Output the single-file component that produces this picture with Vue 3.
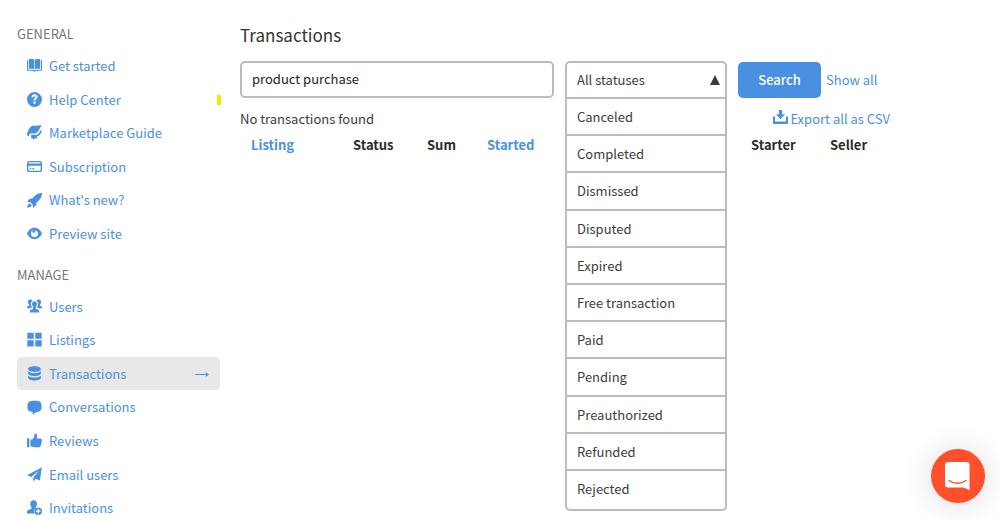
<script setup>
import { ref } from 'vue'

const general = [
  { icon: 'book', label: 'Get started' },
  { icon: 'help', label: 'Help Center', flag: true },
  { icon: 'guide', label: 'Marketplace Guide' },
  { icon: 'card', label: 'Subscription' },
  { icon: 'rocket', label: "What's new?" },
  { icon: 'eye', label: 'Preview site' },
]
const manage = [
  { icon: 'users', label: 'Users' },
  { icon: 'grid', label: 'Listings' },
  { icon: 'stack', label: 'Transactions', active: true },
  { icon: 'chat', label: 'Conversations' },
  { icon: 'thumb', label: 'Reviews' },
  { icon: 'plane', label: 'Email users' },
  { icon: 'invite', label: 'Invitations' },
]
const sections = [
  { title: 'GENERAL', items: general },
  { title: 'MANAGE', items: manage },
]

const icons = {
  book: 'M0 2h1v9h4.6c.6 0 1 .3 1.4.7.4-.4.8-.7 1.4-.7H13V2h1v10H8.700c-.5 0-.6.8-1.700.8S5.800 12 5.300 12H0zM1.700 1h3.500c.7 0 1.200.3 1.500.8v8.800c-.4-.3-.9-.5-1.500-.5H1.700zM12.300 1H8.800c-.7 0-1.200.3-1.500.8v8.800c.4-.3.9-.5 1.500-.5h3.500z',
  help: 'M7 0a7 7 0 1 1 0 14A7 7 0 0 1 7 0zM4.200 5h1.900c0-.7.3-1.100.9-1.100.5 0 .9.300.9.800 0 1-1.800 1.100-1.800 3.200h1.800c0-1.300 2-1.500 2-3.400C9.900 3 8.700 2.200 7.100 2.200 5.300 2.200 4.200 3.300 4.200 5zM6 8.900v2h2v-2z',
  guide: 'M4.500 1C6.500.2 9 1.100 12.300.3L13.600.2c-1.400 2.300-2.700 5.700-5 7.400-1.700.8-4-.2-6 .7-1 .6-.9 1.500-.3 1.900C-.2 10.800-.2 9 .2 7.700 1.200 5 2 2 4.500 1zM12.800 5l1.200.5c-1.200 2.700-2.700 4.900-4.800 5.100V13l-1.600-.8-1.500 1.800-.8-1.700-1.400.2V9.400c1.500-.6 3.200.2 5.200-.2 1.700-.6 2.700-2.400 3.700-4.200z',
  card: 'M2 1.800h10c1.200 0 2 .8 2 2v6.400c0 1.200-.8 2-2 2H2c-1.200 0-2-.8-2-2V3.800c0-1.200.8-2 2-2zM1.300 4.200h11.400c0-.8-.4-1.200-.9-1.200H2.200c-.5 0-.9.4-.9 1.200zM1.300 6.300V10c0 .6.4 1 .9 1h9.600c.5 0 .9-.4.9-1V6.300zM2.500 8.400H4v1.200H2.500zM5 8.400h1.700v1.200H5z',
  rocket: 'M14 0c.1 3.400-1.600 6.200-5.200 9.200l-.2 2.300L5.800 14l-.6-3.200-2.100-2.100L0 8.200l2.600-2.800 2.300-.2C7.800 1.600 10.500-.1 14 0zM2.300 9.500l2.200 2.200c-.7 1.400-2.300 1.800-4.300 2.100.2-2 .7-3.600 2.100-4.300z',
  eye: 'M7 1.700c3.200 0 5.700 2.200 7 5.300-1.300 3.100-3.800 5.300-7 5.300S1.300 10.100 0 7c1.300-3.100 3.800-5.300 7-5.300zM7 3.800a3.300 3.300 0 1 0 3.300 3.300C10.300 5.700 9.200 4.300 7.500 3.900c.5.900.2 1.900-.7 2.200-1 .4-1.700 0-2.100-.7.500-1 1.300-1.500 2.300-1.600z',
  users: 'M.9 2.800a2.300 2.300 0 0 1 4.300-1.200A3.600 3.600 0 0 0 4 6c.1.600.5 1.100.8 1.500L3.400 8.700H0V7.300l1.800-1V5.200c-.5-.5-.9-1.400-.9-2.400zM13.100 2.800a2.300 2.300 0 0 0-4.300-1.200A3.600 3.600 0 0 1 10 6c-.1.600-.5 1.100-.8 1.500l1.400 1.200H14V7.300l-1.800-1V5.200c.5-.5.9-1.400.9-2.400zM7 2.100c1.500 0 2.400 1 2.300 2.500 0 1.100-.5 1.900-1 2.500v2l3 1.500v2H2.700v-2l3-1.500v-2c-.5-.6-1-1.400-1-2.500C4.700 3.100 5.500 2.100 7 2.100z',
  grid: 'M.3.600h6v5.800h-6zM7.700.600h6v5.800h-6zM.3 7.800h6v5.800h-6zM7.700 7.800h6v5.800h-6z',
  stack: 'M7 .3c3.500 0 6 1.100 6 2.600S10.500 5.600 7 5.600 1 4.500 1 2.900 3.500.3 7 .3zM1 5c1.500 1.300 3.600 1.700 6 1.700S11.500 6.300 13 5v1.500c0 1.600-2.500 2.800-6 2.800S1 8.100 1 6.500zM1 9c1.500 1.300 3.600 1.700 6 1.700s4.500-.4 6-1.700v1.700c0 1.700-2.500 2.800-6 2.800s-6-1.100-6-2.800z',
  chat: 'M7 .8c4.900 0 6.600.8 6.600 5.200 0 4.100-1.500 4.900-4.600 5.100L5.300 13.600v-2.500C1.700 10.900.4 10 .4 6 .4 1.600 2.100.8 7 .8z',
  thumb: 'M0 5h2.200v8.200H0zM3.200 6h1.900l1.800-2.900V.8c.7-.5 1.900-.3 2.300.7.500 1.100.1 2.700-.3 3.700h3.600c1.800.2 1.800 2.400 1.100 2.800.3 1 .1 1.700-.4 2.100.2.900-.1 1.500-.6 1.800-.1 1-.7 1.500-2 1.500-2.700.1-5.400-.1-7.400-1z',
  plane: 'M13.800.2l-1.700 12.300-4-1.600-2.200 2.900V9.900l5.700-7-7.500 6.500L0 7.800z',
  invite: 'M6.200.3c2 0 3.200 1.300 3.100 3.500 0 1.300-.5 2.300-1.100 3v.6a4.200 4.200 0 0 0-1 5.300H0v-2.100c.2-1.500 2.600-1.500 4.200-2.700V6.800c-.6-.7-1.100-1.700-1.100-3C3 1.600 4.200.3 6.200.3zM10.500 6.900a3.500 3.500 0 1 1 0 7 3.500 3.500 0 0 1 0-7zM9.900 8.300v1.500H8.400V11h1.500v1.500h1.200V11h1.500V9.800h-1.500V8.300z',
}

const statuses = [
  'Canceled', 'Completed', 'Dismissed', 'Disputed', 'Expired', 'Free transaction',
  'Paid', 'Pending', 'Preauthorized', 'Refunded', 'Rejected',
]
const query = ref('product purchase')
const status = ref('All statuses')
const open = ref(true)

function pick(value) {
  status.value = value
  open.value = false
}
</script>

<template>
  <div class="page">
    <aside class="sidebar">
      <nav v-for="section in sections" :key="section.title" :aria-label="section.title">
        <h2>{{ section.title }}</h2>
        <ul>
          <li v-for="item in section.items" :key="item.label">
            <a href="#" class="link" :class="{ active: item.active }">
              <svg class="icon" viewBox="0 0 14 14" aria-hidden="true">
                <path :d="icons[item.icon]" fill="currentColor" fill-rule="evenodd" />
              </svg>
              <span>{{ item.label }}</span>
              <svg v-if="item.active" class="arrow" viewBox="0 0 14 8" aria-hidden="true">
                <path d="M0 4.500h12" fill="none" stroke="currentColor" />
                <path d="M10.500 2l3.500 2.500L10.500 7l.8-2.500z" fill="currentColor" />
              </svg>
            </a>
            <i v-if="item.flag" class="flag"></i>
          </li>
        </ul>
      </nav>
    </aside>

    <main>
      <h1>Transactions</h1>
      <form class="filters" @submit.prevent>
        <input v-model="query" class="query" type="text" aria-label="Search transactions" />
        <div class="dropdown">
          <button
            type="button"
            class="toggle"
            aria-haspopup="listbox"
            :aria-expanded="open"
            @click="open = !open"
          >
            <span>{{ status }}</span>
            <svg class="caret" viewBox="0 0 10 10" aria-hidden="true">
              <path d="M5 0l5 10H0z" fill="currentColor" />
            </svg>
          </button>
          <ul v-if="open" class="menu" role="listbox" aria-label="Status">
            <li v-for="name in statuses" :key="name" role="option" @click="pick(name)">{{ name }}</li>
          </ul>
        </div>
        <div class="actions">
          <button type="submit" class="search">Search</button>
          <a href="#">Show all</a>
        </div>
      </form>
      <div class="summary">
        <span>No transactions found</span>
        <a href="#" class="export">
          <svg class="icon" viewBox="0 0 14 14" aria-hidden="true">
            <path
              d="M5.500 0h3v4h2.700L7 8.700 2.800 4h2.700zM0 6h1.900v4.800h10.200V6H14v7H0z"
              fill="currentColor"
            />
          </svg>
          <span>Export all as CSV</span>
        </a>
      </div>
      <table>
        <thead>
          <tr>
            <th class="c-listing"><a href="#">Listing</a></th>
            <th class="c-status">Status</th>
            <th class="c-sum">Sum</th>
            <th><a href="#">Started</a></th>
            <th class="c-starter">Starter</th>
            <th class="c-seller">Seller</th>
          </tr>
        </thead>
      </table>
    </main>

    <button class="messenger" type="button" aria-label="Open chat">
      <svg viewBox="0 0 28 30" aria-hidden="true">
        <path d="M4 1h18.500a3 3 0 0 1 3 3v25l-6-2.500H4a3 3 0 0 1-3-3V4a3 3 0 0 1 3-3z" fill="#fff" />
        <path d="M5 19.500c5 3.700 12 3.700 17 0" fill="none" stroke="#ff4f2b" stroke-width="1.500" stroke-linecap="round" />
      </svg>
    </button>
  </div>
</template>

<style>
body {
  background: #fff;
  overflow: hidden;
}
</style>

<style scoped>
.page {
  display: flex;
  gap: 20px;
  padding: 24px 110px 0 17px;
  font-family: "Noto Sans CJK SC", "Noto Sans", sans-serif;
  font-size: 13px;
  line-height: 20px;
  color: #3c3c3c;
}
ul {
  list-style: none;
  margin: 0;
  padding: 0;
}
a {
  color: #4a90e2;
  text-decoration: none;
}
button,
input {
  font: inherit;
  color: inherit;
}
.sidebar {
  flex: 0 0 203px;
}
h2 {
  margin: 0 0 5px;
  font-size: 13px;
  font-weight: 400;
  color: #777;
}
nav + nav h2 {
  margin-top: 14px;
}
.sidebar li {
  position: relative;
}
.link {
  display: flex;
  align-items: center;
  gap: 7px;
  padding: 0 11px 0 10px;
  border-radius: 5px;
  line-height: 2.1rem;
}
.active {
  background: #e8e8e8;
}
.icon {
  width: 15px;
  height: 15px;
}
.arrow {
  width: 14px;
  height: 8px;
  margin-left: auto;
}
.flag {
  position: absolute;
  right: -1px;
  top: 12px;
  width: 4px;
  height: 10px;
  background: #ffe600;
}
main {
  flex: 1;
  min-width: 0;
}
h1 {
  margin: 0 0 15px;
  font-size: 17px;
  line-height: 22px;
  font-weight: 400;
  color: #333;
}
.filters {
  display: grid;
  grid-template-columns: minmax(0, 1fr) 162px 152px;
  gap: 11px;
}
.query {
  box-sizing: border-box;
  width: 100%;
  height: 37px;
  padding: 0 10px 2px;
  border: 2px solid #bbb;
  border-radius: 5px;
  color: #222;
  outline: none;
}
.dropdown {
  position: relative;
  height: 37px;
}
.toggle {
  box-sizing: border-box;
  display: flex;
  align-items: center;
  justify-content: space-between;
  width: 100%;
  height: 38px;
  padding: 0 5px 0 10px;
  border: 2px solid #bbb;
  border-radius: 5px 5px 0 0;
  background: #fff;
}
.caret {
  width: 10px;
  height: 10px;
}
.menu {
  position: absolute;
  z-index: 1;
  top: 38px;
  left: 0;
  right: 0;
  padding-bottom: 3px;
  border: 2px solid #bbb;
  border-top: 0;
  border-radius: 0 0 5px 5px;
  background: #fff;
}
.menu li {
  padding-left: 10px;
  line-height: 2.2rem;
}
.menu li + li {
  border-top: 2px solid #bbb;
}
.actions {
  display: flex;
  align-items: center;
  gap: 5px;
}
.search {
  width: 83px;
  height: 36px;
  padding: 0;
  border: 0;
  border-radius: 5px;
  background: #4a90e2;
  color: #fff;
  font-weight: 500;
}
.summary {
  display: flex;
  justify-content: space-between;
  margin-top: 11px;
}
.export {
  display: flex;
  gap: 2px;
}
.export .icon {
  margin-top: 1px;
}
table {
  width: 100%;
  margin-top: 6px;
  border-collapse: collapse;
  table-layout: fixed;
}
th {
  padding: 0;
  text-align: left;
  font-weight: 700;
  color: #2b2b2b;
}
.c-listing {
  width: 102px;
  padding-left: 11px;
}
.c-status {
  width: 74px;
}
.c-sum {
  width: 60px;
}
.c-starter {
  width: 79px;
}
.c-seller {
  width: 60px;
}
.messenger {
  position: fixed;
  right: 15px;
  bottom: 17px;
  display: grid;
  place-items: center;
  width: 54px;
  height: 54px;
  padding: 0;
  border: 0;
  border-radius: 50%;
  background: #ff4f2b;
  box-shadow: 0 1px 6px rgba(0, 0, 0, 0.06), 0 2px 32px rgba(0, 0, 0, 0.14);
}
.messenger svg {
  width: 28px;
  height: 30px;
}
</style>
